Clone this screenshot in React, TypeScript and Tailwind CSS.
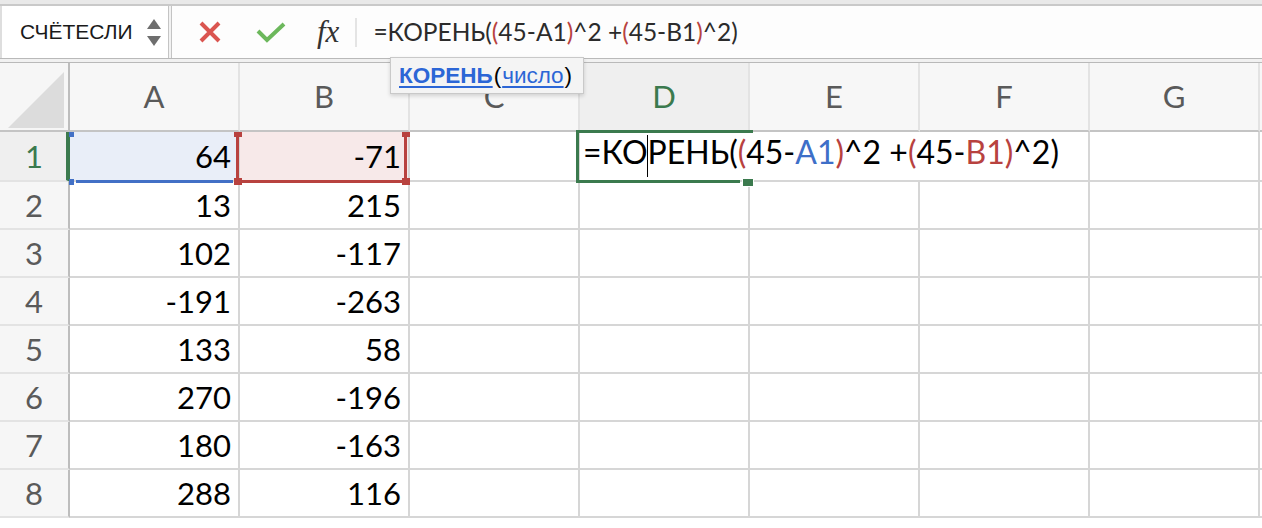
import React from 'react'

const cols = ['A', 'B', 'C', 'D', 'E', 'F', 'G']

const data: [string, string][] = [
  ['64', '-71'],
  ['13', '215'],
  ['102', '-117'],
  ['-191', '-263'],
  ['133', '58'],
  ['270', '-196'],
  ['180', '-163'],
  ['288', '116'],
]

const RED = 'text-[#b8423f]'
const BLUE = 'text-[#3e6fc8]'

function CellFormula() {
  return (
    <span className="whitespace-nowrap">
      =КО<span className="inline-block w-[1.5px] h-[42px] bg-black align-middle -mx-[0.75px]" />РЕНЬ(
      <span className={RED}>(</span>45-<span className={BLUE}>A1</span>
      <span className={RED}>)</span>^2 +<span className={RED}>(</span>45-
      <span className={RED}>B1</span>
      <span className={RED}>)</span>^2)
    </span>
  )
}

function BarFormula() {
  return (
    <span className="whitespace-nowrap">
      =КОРЕНЬ(<span className={RED}>(</span>45-A1<span className={RED}>)</span>^2 +
      <span className={RED}>(</span>45-B1<span className={RED}>)</span>^2)
    </span>
  )
}

export default function App() {
  return (
    <div
      className="relative w-[1262px] h-[528px] overflow-hidden bg-white"
      style={{ fontFamily: 'Lato, "Noto Sans", sans-serif' }}
    >
      {/* top strip */}
      <div className="h-[6px] bg-[#e9e9e9] border-b-2 border-[#c9c9c9]" />

      {/* formula bar */}
      <div className="flex h-[52px] bg-[#fdfdfd]">
        <div className="flex items-center w-[168px] bg-white border-l-2 border-[#dedede] pl-[18px] pr-[6px]">
          <div
            className="w-[117px] overflow-hidden whitespace-nowrap text-[21px] text-[#1a1a1a]"
            style={{ fontFamily: '"Liberation Sans", Arial, sans-serif' }}
          >
            СЧЁТЕСЛИ
          </div>
          <div className="flex flex-col gap-[7px] ml-[10px]">
            <svg width="14" height="10" viewBox="0 0 14 10">
              <polygon points="7,0 14,10 0,10" fill="#6e6e6e" />
            </svg>
            <svg width="14" height="10" viewBox="0 0 14 10">
              <polygon points="0,0 14,0 7,10" fill="#6e6e6e" />
            </svg>
          </div>
        </div>
        <div className="w-[4px] bg-[#f2f2f2] border-x border-[#c4c4c4]" />
        <div className="flex items-center flex-1">
          <svg className="ml-[27px]" width="22" height="22" viewBox="0 0 22 22">
            <path d="M2 2 L20 20 M20 2 L2 20" stroke="#da5550" strokeWidth="4" />
          </svg>
          <svg className="ml-[35px]" width="30" height="22" viewBox="0 0 30 22">
            <path d="M2 10 L11 19 L28 3" stroke="#6cb85c" strokeWidth="4" fill="none" />
          </svg>
          <span
            className="ml-[31px] text-[31px] italic text-[#333] leading-none -mt-[2px]"
            style={{ fontFamily: '"Liberation Serif", "Times New Roman", serif' }}
          >
            fx
          </span>
          <div className="ml-[16px] w-[2px] h-[29px] bg-[#e4e4e4]" />
          <div className="ml-[16px] text-[24.5px] text-[#2b2b2b] leading-none">
            <BarFormula />
          </div>
        </div>
      </div>

      {/* double rule under the bar */}
      <div className="h-[5px] bg-[#f1f1f1] border-y border-[#b9b9b9]" />

      {/* grid */}
      <div className="grid grid-cols-[70px_repeat(7,170px)_1fr] text-[31px] leading-none">
        {/* header row */}
        <div className="relative h-[69px] bg-[#f6f6f6] border-r-2 border-b-2 border-r-[#bdbdbd] border-b-[#c4c4c4]">
          <svg className="absolute left-0 top-0" width="68" height="67" viewBox="0 0 68 67">
            <polygon points="8,65 64,65 64,9" fill="#dcdcdc" />
          </svg>
        </div>
        {cols.map((c) => (
          <div
            key={c}
            className={`h-[69px] flex items-center justify-center border-r-2 border-b-2 border-r-[#e3e3e3] ${
              c === 'D'
                ? 'bg-[#efefef] text-[#3b7a4e] border-b-[#3b7a4e]'
                : 'bg-[#f7f7f7] text-[#5a5a5a] border-b-[#c4c4c4]'
            }`}
          >
            {c}
          </div>
        ))}
        <div className="h-[69px] bg-[#f7f7f7] border-b-2 border-[#c4c4c4]" />

        {/* data rows */}
        {data.map(([a, b], i) => {
          const first = i === 0
          const h = first ? 'h-[50px]' : 'h-[48px]'
          return (
            <React.Fragment key={i}>
              <div
                className={`${h} flex items-center justify-center border-b-2 border-b-[#e3e3e3] ${
                  first
                    ? 'bg-[#efefef] text-[#3b7a4e] border-r-4 border-r-[#3b7a4e] pl-[2px]'
                    : 'bg-[#f6f6f6] text-[#5a5a5a] border-r-2 border-r-[#bdbdbd]'
                }`}
              >
                {i + 1}
              </div>
              <div
                className={`${h} flex items-center justify-end pr-[7px] border-r-2 border-b-2 border-[#d6d6d6] text-black ${
                  first ? 'bg-[#e9eef8]' : ''
                }`}
              >
                {a}
              </div>
              <div
                className={`${h} flex items-center justify-end pr-[7px] border-r-2 border-b-2 border-[#d6d6d6] text-black ${
                  first ? 'bg-[#f7e9e9]' : ''
                }`}
              >
                {b}
              </div>
              <div className={`${h} border-r-2 border-b-2 border-[#d6d6d6]`} />
              {first ? (
                <>
                  <div className={`${h} relative z-10 flex items-center pl-[3px] border-b-2 border-[#d6d6d6] text-black text-[32px]`}>
                    <CellFormula />
                  </div>
                  <div className={`${h} border-b-2 border-[#d6d6d6]`} />
                </>
              ) : (
                <>
                  <div className={`${h} border-r-2 border-b-2 border-[#d6d6d6]`} />
                  <div className={`${h} border-r-2 border-b-2 border-[#d6d6d6]`} />
                </>
              )}
              <div className={`${h} border-r-2 border-b-2 border-[#d6d6d6]`} />
              <div className={`${h} border-r-2 border-b-2 border-[#d6d6d6]`} />
              <div className={`${h} border-b-2 border-[#d6d6d6]`} />
            </React.Fragment>
          )
        })}
      </div>

      {/* reference highlight A1 (blue) */}
      <div className="absolute left-[76px] top-[180px] w-[157px] h-[3px] bg-[#4270c6]" />
      <div className="absolute left-[69px] top-[132px] w-[5px] h-[5px] bg-[#4270c6]" />
      <div className="absolute left-[69px] top-[179px] w-[5px] h-[6px] bg-[#4270c6]" />

      {/* reference highlight B1 (red) */}
      <div className="absolute left-[236px] top-[132px] w-[3px] h-[51px] bg-[#b8423f]" />
      <div className="absolute left-[404px] top-[132px] w-[3px] h-[51px] bg-[#b8423f]" />
      <div className="absolute left-[236px] top-[180px] w-[171px] h-[3px] bg-[#b8423f]" />
      <div className="absolute left-[234px] top-[132px] w-[8px] h-[5px] bg-[#b8423f]" />
      <div className="absolute left-[402px] top-[132px] w-[8px] h-[5px] bg-[#b8423f]" />
      <div className="absolute left-[234px] top-[178px] w-[8px] h-[7px] bg-[#b8423f]" />
      <div className="absolute left-[402px] top-[178px] w-[8px] h-[7px] bg-[#b8423f]" />

      {/* active cell D1 (edit mode, right edge hidden by text) */}
      <div className="absolute left-[576px] top-[130px] w-[177px] h-[3px] bg-[#3b7a4e] z-20" />
      <div className="absolute left-[576px] top-[130px] w-[3px] h-[53px] bg-[#3b7a4e] z-20" />
      <div className="absolute left-[576px] top-[180px] w-[164px] h-[3px] bg-[#3b7a4e] z-20" />
      <div className="absolute left-[742px] top-[178px] w-[12px] h-[9px] bg-[#3b7a4e] border border-white z-20" />

      {/* function tooltip */}
      <div
        className="absolute left-[390px] top-[57px] w-[194px] h-[37px] flex items-center pl-[8px] bg-[#f4f4f4] border border-[#c9c9c9] shadow-[0_2px_4px_rgba(0,0,0,0.15)] text-[22.5px] text-black z-30"
        style={{ fontFamily: '"Liberation Sans", Arial, sans-serif' }}
      >
        <span className="font-bold text-[#2c66d6] underline decoration-2 underline-offset-[3px]">КОРЕНЬ</span>
        <span className="px-[1px]">(</span>
        <span className="text-[#2c66d6] underline decoration-2 underline-offset-[3px]">число</span>
        <span className="px-[1px]">)</span>
      </div>
    </div>
  )
}
